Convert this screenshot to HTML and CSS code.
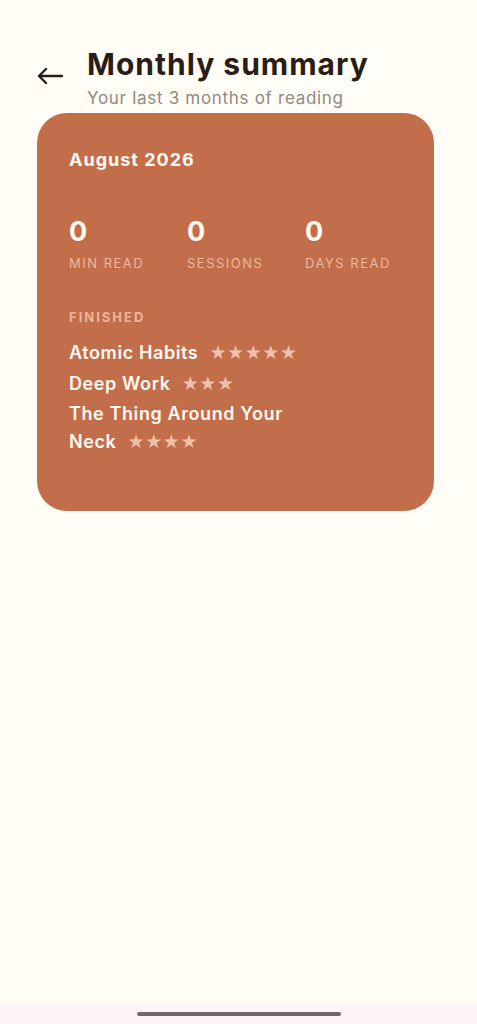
FILE: index.html
```html
<!DOCTYPE html>
<html lang="en">
<head>
    <meta charset="UTF-8">
    <meta name="viewport" content="width=device-width, initial-scale=1.0">
    <title>Monthly summary</title>
    <link rel="stylesheet" href="styles.css">
</head>
<body>
    <div class="screen">
        <header class="top">
            <button class="back" aria-label="Back">
                <svg width="26" height="16" viewBox="0 0 26 16">
                    <path d="M25 8H2M9 1L2 8l7 7" fill="none" stroke="#2a1d17" stroke-width="2.4" stroke-linecap="round" stroke-linejoin="round"/>
                </svg>
            </button>
            <div class="titles">
                <h1>Monthly summary</h1>
                <p class="sub">Your last 3 months of reading</p>
            </div>
        </header>

        <section class="card">
            <h2>August 2026</h2>
            <div class="stats">
                <div class="stat">
                    <div class="num">0</div>
                    <div class="label">MIN READ</div>
                </div>
                <div class="stat">
                    <div class="num">0</div>
                    <div class="label">SESSIONS</div>
                </div>
                <div class="stat">
                    <div class="num">0</div>
                    <div class="label">DAYS READ</div>
                </div>
            </div>
            <div class="finished">
                <div class="heading">FINISHED</div>
                <ul class="books">
                    <li>Atomic Habits <span class="stars">★★★★★</span></li>
                    <li>Deep Work <span class="stars">★★★</span></li>
                    <li class="wrap"><span>The Thing Around Your</span> <span>Neck</span> <span class="stars">★★★★</span></li>
                </ul>
            </div>
        </section>
    </div>
    <div class="navbar"><span class="handle"></span></div>
</body>
</html>
```

FILE: styles.css
```css
* {
    margin: 0;
    padding: 0;
    box-sizing: border-box;
}

body {
    background: #fffdf5;
    font-family: Inter, "Open Sans", sans-serif;
    width: 477px;
    height: 1024px;
    display: flex;
    flex-direction: column;
    overflow: hidden;
}

.screen {
    flex: 1;
    padding: 45px 43px 0 37px;
}

.top {
    display: flex;
    align-items: flex-start;
    gap: 24px;
}

.back {
    background: none;
    border: none;
    margin-top: 23px;
    width: 26px;
    height: 16px;
    display: flex;
}

h1 {
    font-size: 30px;
    font-weight: 700;
    color: #2a1d17;
    letter-spacing: 1px;
    line-height: 38px;
}

.sub {
    font-size: 17px;
    color: #8f8a85;
    line-height: 22px;
    margin-top: 4px;
    letter-spacing: 0.7px;
}

.card {
    margin-top: 4px;
    background: #c26e4b;
    border-radius: 30px;
    padding: 35px 32px 52px;
    color: #fff8f0;
}

h2 {
    font-size: 18px;
    font-weight: 700;
    line-height: 24px;
    letter-spacing: 1px;
}

.stats {
    display: grid;
    grid-template-columns: 118px 118px 118px;
    margin-top: 44px;
}

.num {
    font-size: 27px;
    font-weight: 700;
    line-height: 32px;
}

.label {
    margin-top: 7px;
    font-size: 13px;
    letter-spacing: 1.5px;
    color: #eab8a0;
}

.finished {
    margin-top: 37px;
}

.heading {
    font-size: 13px;
    font-weight: 700;
    letter-spacing: 2px;
    color: #ebb59c;
    line-height: 18px;
}

.books {
    list-style: none;
    margin-top: 13px;
}

.books li {
    font-size: 18px;
    font-weight: 600;
    line-height: 28px;
    letter-spacing: 0.6px;
    margin-bottom: 2.5px;
}

.books li.wrap {
    max-width: 230px;
}

.stars {
    display: inline-block;
    color: #f0c0aa;
    font-size: 19px;
    line-height: 20px;
    margin-left: 6px;
    font-family: "DejaVu Sans", sans-serif;
}

.navbar {
    height: 20px;
    background: #fdf4f6;
    display: flex;
    justify-content: center;
    align-items: center;
}

.handle {
    width: 204px;
    height: 4px;
    border-radius: 2px;
    background: #6e6a6a;
}
```
